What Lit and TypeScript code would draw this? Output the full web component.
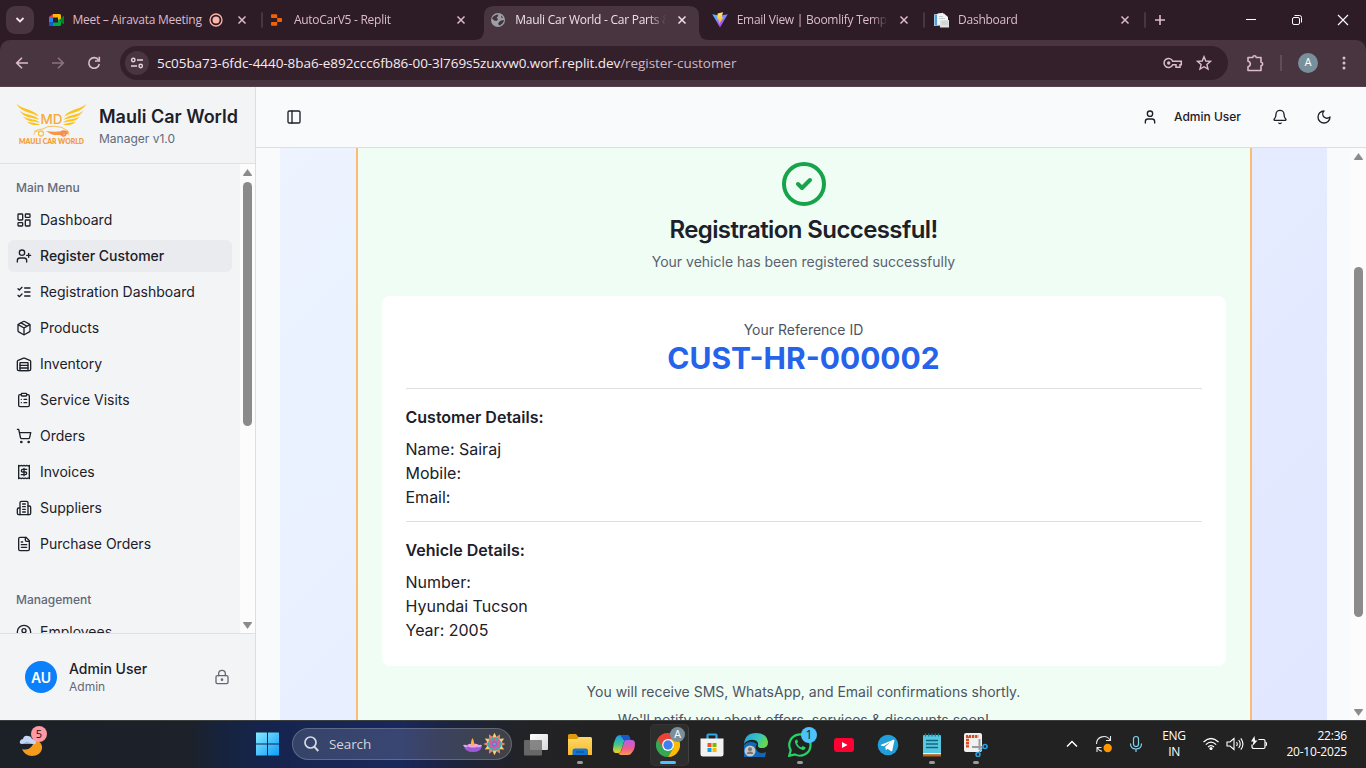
import { LitElement, html, svg, css, nothing } from "lit";
import { customElement, property } from "lit/decorators.js";

/* ---------- stroke icons on a 24 unit grid ---------- */
const glyphs: Record<string, unknown> = {
  dashboard: svg`<rect width="7" height="9" x="3" y="3" rx="1"/><rect width="7" height="5" x="14" y="3" rx="1"/><rect width="7" height="9" x="14" y="12" rx="1"/><rect width="7" height="5" x="3" y="16" rx="1"/>`,
  userPlus: svg`<path d="M16 21v-2a4 4 0 0 0-4-4H6a4 4 0 0 0-4 4v2"/><circle cx="9" cy="7" r="4"/><path d="M19 8v6M22 11h-6"/>`,
  checks: svg`<path d="m3 17 2 2 4-4M3 7l2 2 4-4M13 6h8M13 12h8M13 18h8"/>`,
  box: svg`<path d="M11 21.73a2 2 0 0 0 2 0l7-4A2 2 0 0 0 21 16V8a2 2 0 0 0-1-1.73l-7-4a2 2 0 0 0-2 0l-7 4A2 2 0 0 0 3 8v8a2 2 0 0 0 1 1.73z"/><path d="M12 22V12M3.29 7 12 12l8.71-5M7.5 4.27l9 5.15"/>`,
  warehouse: svg`<path d="M22 8.35V20a2 2 0 0 1-2 2H4a2 2 0 0 1-2-2V8.35A2 2 0 0 1 3.26 6.5l8-3.2a2 2 0 0 1 1.48 0l8 3.2A2 2 0 0 1 22 8.35Z"/><path d="M6 18h12M6 14h12"/><rect width="12" height="12" x="6" y="10"/>`,
  clipboard: svg`<rect width="8" height="4" x="8" y="2" rx="1"/><path d="M16 4h2a2 2 0 0 1 2 2v14a2 2 0 0 1-2 2H6a2 2 0 0 1-2-2V6a2 2 0 0 1 2-2h2M12 11h4M12 16h4M8 11h.01M8 16h.01"/>`,
  cart: svg`<circle cx="8" cy="21" r="1"/><circle cx="19" cy="21" r="1"/><path d="M2.05 2.05h2l2.66 12.42a2 2 0 0 0 2 1.58h9.78a2 2 0 0 0 1.95-1.57l1.65-7.43H5.12"/>`,
  receipt: svg`<path d="M4 2v20l2-1 2 1 2-1 2 1 2-1 2 1 2-1 2 1V2l-2 1-2-1-2 1-2-1-2 1-2-1-2 1Z"/><path d="M16 8h-6a2 2 0 1 0 0 4h4a2 2 0 1 1 0 4H8M12 17.5v-11"/>`,
  building: svg`<path d="M6 22V4a2 2 0 0 1 2-2h8a2 2 0 0 1 2 2v18Z"/><path d="M6 12H4a2 2 0 0 0-2 2v6a2 2 0 0 0 2 2h2M18 9h2a2 2 0 0 1 2 2v9a2 2 0 0 1-2 2h-2M10 6h4M10 10h4M10 14h4M10 18h4"/>`,
  file: svg`<path d="M15 2H6a2 2 0 0 0-2 2v16a2 2 0 0 0 2 2h12a2 2 0 0 0 2-2V7Z"/><path d="M14 2v4a2 2 0 0 0 2 2h4M10 9H8M16 13H8M16 17H8"/>`,
  userCircle: svg`<circle cx="12" cy="12" r="10"/><circle cx="12" cy="10" r="3"/><path d="M7 20.66V19a2 2 0 0 1 2-2h6a2 2 0 0 1 2 2v1.66"/>`,
  lock: svg`<circle cx="12" cy="16" r="1"/><rect x="3" y="10" width="18" height="12" rx="2"/><path d="M7 10V7a5 5 0 0 1 10 0v3"/>`,
  panel: svg`<rect width="18" height="18" x="3" y="3" rx="2"/><path d="M9 3v18"/>`,
  user: svg`<path d="M19 21v-2a4 4 0 0 0-4-4H9a4 4 0 0 0-4 4v2"/><circle cx="12" cy="7" r="4"/>`,
  bell: svg`<path d="M10.27 21a2 2 0 0 0 3.46 0M3.26 15.33A1 1 0 0 0 4 17h16a1 1 0 0 0 .74-1.67C19.41 13.96 18 12.5 18 8A6 6 0 0 0 6 8c0 4.5-1.41 5.96-2.74 7.33"/>`,
  moon: svg`<path d="M12 3a6 6 0 0 0 9 9 9 9 0 1 1-9-9Z"/>`,
  success: svg`<circle cx="12" cy="12" r="10"/><path d="m9 12 2 2 4-4"/>`,
};
const icon = (name: string, size = 16) => html`<svg width=${size} height=${size} viewBox="0 0 24 24" fill="none" stroke="currentColor" stroke-width="2" stroke-linecap="round" stroke-linejoin="round">${glyphs[name]}</svg>`;
const art = (w: number, h: number, body: unknown) => html`<svg width=${w} height=${h} viewBox="0 0 ${w} ${h}" fill="none">${body}</svg>`;

const base = css`
  * { box-sizing: border-box; }
  svg { display: block; flex: none; }
`;

/* ---------- browser frame ---------- */
const favicons: Record<string, unknown> = {
  meet: svg`<path d="M1 5 5 2v4H1z" fill="#ea4335"/><path d="M5 2h6.500q1.500 0 1.500 1.500V7l-3 2V5.500H5z" fill="#fbbc04"/><path d="M1 5.500h4v5H1z" fill="#2684fc"/><path d="M1 10.500h4V14H2.200Q1 14 1 12.800z" fill="#0066da"/><path d="M5 10.500h5V8l3-1.500v6Q13 14 11.500 14H5z" fill="#00ac47"/><path d="M12 8l3.200-4q.8-.4.8.4v7.200q0 .8-.8.4L12 9z" fill="#00832d"/>`,
  replit: svg`<path d="M3 2.200h4.400q.8 0 .8.800v3H3q-1 0-1-1v-2q0-.8 1-.8zM8.200 6H12q1 0 1 .8v2.400q0 .8-1 .8H8.200zM3 10h5.200v3q0 .8-.8.8H3q-1 0-1-.8v-2q0-1 1-1z" fill="#f26207"/>`,
  globe: svg`<circle cx="8" cy="8" r="7" fill="#9aa0a6"/><path d="M2 6.500c1.500-3 4-4 6.500-4L7.500 5l-1 .5L8 7.300l-1 1.500H4.500zM11 8.500l3-.5c-.2 2.500-2 4.500-4.500 5.500L8 12l1-2zM11 3.500l2 2-1.500.8z" fill="#45323c"/>`,
  vite: svg`<defs><linearGradient id="va" x1="0" y1="0" x2=".6" y2="1"><stop stop-color="#41d1ff"/><stop offset="1" stop-color="#bd34fe"/></linearGradient><linearGradient id="vb" x1="0" y1="0" x2="0" y2="1"><stop stop-color="#ffea83"/><stop offset="1" stop-color="#ffa800"/></linearGradient></defs><path d="M.3 2.300 8 15.500 15.700 2.300 8 3.700z" fill="url(#va)"/><path d="M11 .3 5.600 1.400 5.200 7.600l1.700-.4-.5 2.300 1.100-.3-.8 3.600L11.600 5l-2 .4z" fill="url(#vb)"/>`,
  page: svg`<path d="M1 2.500 10 .8v12.500L1 14z" fill="#e8eef2"/><path d="M1.500 2.800 4 2.500v11H1.500z" fill="#4f9fd4"/><path d="M5 1.500h6l4 3.500V12H5z" fill="#f4f4f2"/><path d="M7 8h9v7.500H7z" fill="#dfe2e2"/><path d="M8.500 10H15M8.500 12H15M6 4.500h4M6 6.500h6" stroke="#bdc3c5" stroke-width=".8"/>`,
};

const tabs = [
  { title: "Meet – Airavata Meeting", fav: "meet", rec: true, rule: true },
  { title: "AutoCarV5 - Replit", fav: "replit" },
  { title: "Mauli Car World - Car Parts & Services", fav: "globe", active: true },
  { title: "Email View | Boomlify Temporary Mail", fav: "vite", rule: true },
  { title: "Dashboard", fav: "page", rule: true },
];

@customElement("browser-frame")
class BrowserFrame extends LitElement {
  static styles = [base, css`
    :host { display: block; flex: none; height: 87px; background: #2d1b26; color: #dcbccb; font-family: "Open Sans", "Noto Sans", sans-serif; }
    .strip { height: 40px; display: flex; padding-left: 6px; }
    .search { width: 28px; height: 28px; margin: 6px 7.500px 0 0; border-radius: 9px; background: #49353f; display: grid; place-items: center; }
    .tab { width: 221.400px; height: 34px; margin-top: 6px; display: flex; align-items: center; padding: 0 0 6px 6px; position: relative; }
    .tab.active { color: #eee1e8; }
    .plate { position: absolute; left: -10px; top: 0; }
    .fav { position: relative; width: 16px; margin-right: 9px; }
    .title { position: relative; width: 151px; font-size: 12px; line-height: 18px; letter-spacing: -0.26px; white-space: nowrap; overflow: hidden; mask-image: linear-gradient(90deg, #000 134px, transparent 151px); }
    .rec .title { width: 134px; mask-image: none; }
    .recdot { margin: 0 9px 0 5px; }
    .x { position: relative; margin-left: 11px; }
    .rec .x { margin-left: 5px; }
    .rule { width: 2px; height: 16px; background: #49353f; margin-left: 14px; border-radius: 1px; }
    .new { margin: 14px 0 0 6px; }
    .controls { margin-left: auto; display: flex; }
    .controls > * { width: 46px; height: 40px; display: grid; place-items: center; color: #fff; }
    .bar { height: 47px; background: #49353f; border-radius: 10px 10px 0 0; border-bottom: 1px solid #57424c; display: flex; align-items: center; padding: 0 4px 1px; }
    .btn { width: 36px; display: grid; place-items: center; }
    .dim { opacity: 0.45; }
    .omni { width: 1108px; height: 34px; border-radius: 17px; background: #33202b; margin-left: 8px; display: flex; align-items: center; padding: 0 16px 0 5px; }
    .site { width: 24px; height: 24px; border-radius: 50%; background: #49353f; display: grid; place-items: center; margin-right: 8px; }
    .url { font-size: 13.500px; line-height: 20px; letter-spacing: -0.06px; color: #cdb9c3; white-space: nowrap; flex: 1; }
    .host { color: #f5ebf0; }
    .key { margin-right: 13px; }
    .ext { margin-left: 18px; }
    .split { width: 2px; height: 16px; background: #634c58; margin: 0 16px 0 16px; }
    .me { width: 20px; height: 20px; border-radius: 50%; background: #78909c; color: #fff; display: grid; place-items: center; font: 11px/20px Roboto, sans-serif; }
    .dots { margin-left: 17px; }
  `];
  tabTpl(t: any) {
    return html`<div class="tab ${t.active ? "active" : ""} ${t.rec ? "rec" : ""}">
      ${t.active ? html`<div class="plate">${art(235, 34, svg`<path d="M0 34q10 0 10-10V10q0-10 10-10h195q10 0 10 10v14q0 10 10 10z" fill="#49353f"/>`)}</div>` : nothing}
      <div class="fav">${art(16, 16, favicons[t.fav])}</div>
      <div class="title">${t.title}</div>
      ${t.rec ? html`<div class="recdot">${art(14, 14, svg`<circle cx="7" cy="7" r="6" stroke="#ffb4a9" stroke-width="1.300"/><circle cx="7" cy="7" r="3.500" fill="#ffb4a9"/>`)}</div>` : nothing}
      <div class="x">${art(10, 10, svg`<path d="m1.500 1.500 7 7m0-7-7 7" stroke="currentColor" stroke-width="1.500"/>`)}</div>
      ${t.rule ? html`<div class="rule"></div>` : nothing}
    </div>`;
  }
  render() {
    return html`
      <div class="strip">
        <div class="search">${art(10, 8, svg`<path d="m1.500 2 3.500 3.500L8.500 2" stroke="#f3e4ec" stroke-width="1.800"/>`)}</div>
        ${tabs.map((t) => this.tabTpl(t))}
        <div class="new">${art(12, 12, svg`<path d="M6 1v10M1 6h10" stroke="currentColor" stroke-width="1.600"/>`)}</div>
        <div class="controls">
          <div>${art(12, 12, svg`<path d="M1 5.500h10" stroke="#fff"/>`)}</div>
          <div>${art(12, 12, svg`<rect x="1.500" y="3.500" width="7" height="7" rx="1.500" stroke="#fff"/><path d="M3.500 1.500h5q2 0 2 2v5" stroke="#fff"/>`)}</div>
          <div>${art(12, 12, svg`<path d="m1 1 10 10M11 1 1 11" stroke="#fff" stroke-width="1.100"/>`)}</div>
        </div>
      </div>
      <div class="bar">
        <div class="btn">${art(14, 14, svg`<path d="M13 7H2m5-5.300L1.700 7 7 12.300" stroke="currentColor" stroke-width="1.600"/>`)}</div>
        <div class="btn dim">${art(14, 14, svg`<path d="M1 7h11M7 1.700 12.300 7 7 12.300" stroke="currentColor" stroke-width="1.600"/>`)}</div>
        <div class="btn">${art(14, 14, svg`<path d="M11.500 4A5.300 5.300 0 1 0 12.300 8" stroke="currentColor" stroke-width="1.600"/><path d="M12.300.800V5H8" stroke="currentColor" stroke-width="1.600"/>`)}</div>
        <div class="omni">
          <div class="site">${art(14, 12, svg`<g stroke="#e8d3dd" stroke-width="1.400"><circle cx="3.300" cy="3" r="1.700"/><path d="M7 3h6M1 9h6"/><circle cx="10.700" cy="9" r="1.700"/></g>`)}</div>
          <div class="url"><span class="host">5c05ba73-6fdc-4440-8ba6-e892ccc6fb86-00-3l769s5zuxvw0.worf.replit.dev</span>/register-customer</div>
          <div class="key">${art(20, 12, svg`<g stroke="currentColor" stroke-width="1.500"><path d="M9.700 4.200A4.500 4.500 0 1 0 9.700 7.800H13v2.500h4V7.800h1.300V4.200z"/></g><circle cx="5.700" cy="6" r="1.700" fill="currentColor"/>`)}</div>
          <div>${art(16, 16, svg`<path d="m8 1.700 1.800 4.300 4.700.4-3.600 3.100 1.100 4.600L8 11.700l-4 2.400 1.100-4.600L1.500 6.400 6.200 6z" stroke="currentColor" stroke-width="1.400"/>`)}</div>
        </div>
        <div class="ext">${art(18, 18, svg`<path d="M2 3.500h4.800q.2-1.700 1.700-1.700t1.700 1.700H15v4.800q1.700.2 1.700 1.700T15 11.700V16.500H2v-3.800q2.300-.4 2.300-2.700T2 7.300z" stroke="currentColor" stroke-width="1.600" stroke-linejoin="round"/>`)}</div>
        <div class="split"></div>
        <div class="me">A</div>
        <div class="dots">${art(16, 16, svg`<g fill="currentColor"><circle cx="9" cy="3" r="1.500"/><circle cx="9" cy="8" r="1.500"/><circle cx="9" cy="13" r="1.500"/></g>`)}</div>
      </div>`;
  }
}

/* ---------- scrollbar ---------- */
@customElement("scroll-rail")
class ScrollRail extends LitElement {
  @property({ type: Number }) before = 0;
  @property({ type: Number }) length = 100;
  static styles = [base, css`
    :host { display: flex; flex-direction: column; width: 15px; flex: none; background: #fcfcfc; align-items: center; padding: 5px 0 4px; }
    .thumb { width: 9px; border-radius: 5px; background: #8b8b8b; }
    .gap { flex: 1; }
  `];
  render() {
    return html`
      ${art(9, 7, svg`<path d="M4.500.500 8.500 6v1h-8V6z" fill="#8b8b8b" stroke="#8b8b8b" stroke-width=".6" stroke-linejoin="round"/>`)}
      <div class="thumb" style="margin-top:${this.before}px;height:${this.length}px"></div>
      <div class="gap"></div>
      ${art(9, 7, svg`<path d="M4.500 6.500 8.500 1V0h-8v1z" fill="#8b8b8b" stroke="#8b8b8b" stroke-width=".6" stroke-linejoin="round"/>`)}`;
  }
}

/* ---------- sidebar ---------- */
const menu: [string, string][] = [
  ["dashboard", "Dashboard"], ["userPlus", "Register Customer"], ["checks", "Registration Dashboard"],
  ["box", "Products"], ["warehouse", "Inventory"], ["clipboard", "Service Visits"], ["cart", "Orders"],
  ["receipt", "Invoices"], ["building", "Suppliers"], ["file", "Purchase Orders"],
];
const wing = svg`<path d="M.3.800C6 6.500 17 5.500 23 13.500 16 9.500 5.500 10 .3.800z"/><path d="M3.500 7.500C8 12.500 18 10.500 23.500 16.800 17 14.300 7.500 15.300 3.500 7.500z"/><path d="M7 13C11 17 18 14.800 24 19.500 18 18.300 10.500 19.300 7 13z"/><path d="M11 18.300c3 2.200 9 .700 13 3.600-4 .3-10 1-13-3.600z"/>`;

@customElement("app-sidebar")
class AppSidebar extends LitElement {
  static styles = [base, css`
    :host { display: flex; flex-direction: column; width: 256px; flex: none; background: #f3f4f6; border-right: 1px solid #dcdee1; color: #1c2029; font-family: Inter, sans-serif; }
    .brand { height: 77px; flex: none; border-bottom: 1px solid #dfe1e4; display: flex; padding: 16px 0 0 16px; gap: 12px; }
    .brand svg { overflow: visible; }
    .name { font-size: 18px; font-weight: 600; line-height: 28px; white-space: nowrap; }
    .ver { font-size: 12px; line-height: 16px; color: #626976; }
    .scroll { flex: 1; min-height: 0; display: flex; }
    .list { flex: 1; overflow: hidden; padding: 8px; }
    .label { height: 32px; padding: 0 8px; font-size: 12px; line-height: 32px; color: #626976; font-weight: 500; }
    .items { display: flex; flex-direction: column; gap: 4px; margin-bottom: 24px; }
    .item { height: 32px; display: flex; align-items: center; gap: 8px; padding: 0 8px; border-radius: 6px; font-size: 14px; line-height: 20px; }
    .on { background: #e9ebee; font-weight: 500; }
    .foot { height: 87px; flex: none; border-top: 1px solid #dfe1e4; display: flex; align-items: center; padding: 0 25px; }
    .avatar { width: 32px; height: 32px; border-radius: 50%; background: #0a80fb; color: #fff; font-size: 14px; font-weight: 600; display: grid; place-items: center; margin-right: 12px; }
    .who { flex: 1; }
    .user { font-size: 14px; line-height: 20px; font-weight: 500; }
    .role { font-size: 12px; line-height: 16px; color: #626976; }
    .lock { color: #626976; }
    .logotext { font: 800 8px Lato, sans-serif; }
    .md { font: 500 13.500px Inter, sans-serif; }
  `];
  render() {
    return html`
      <div class="brand">
        ${art(71, 50, svg`<g fill="#fdc31c"><g>${wing}</g><g transform="translate(71) scale(-1 1)">${wing}</g></g>
          <text class="md" x="35.500" y="21" text-anchor="middle" fill="#f5a93d">MD</text>
          <path d="M18 28.500q4-2.500 9-2.500l5-2.500q7-1 14 1l5 3" stroke="#f9c15a" stroke-width="1"/>
          <path d="M30 28q10 1.500 22-.500l1 3-6 1.500H38q-4-1-8-4z" fill="#f7954a"/>
          <path d="M18 32q0-4 5-4M47 28q5 0 6 4" stroke="#f8b848" stroke-width=".8"/>
          <circle cx="25" cy="30.500" r="2.500" stroke="#fbc53b" stroke-width="1.300"/><circle cx="47.500" cy="30.500" r="2.500" stroke="#f3855a" stroke-width="1.300"/>
          <text class="logotext" x="3" y="41" textLength="65" lengthAdjust="spacingAndGlyphs" fill="#f59e38">MAULI CAR WORLD</text>`)}
        <div><div class="name">Mauli Car World</div><div class="ver">Manager v1.0</div></div>
      </div>
      <div class="scroll">
        <div class="list">
          <div class="label">Main Menu</div>
          <div class="items">${menu.map(([i, t]) => html`<div class="item ${i === "userPlus" ? "on" : ""}">${icon(i)}<span>${t}</span></div>`)}</div>
          <div class="label">Management</div>
          <div class="item">${icon("userCircle")}<span>Employees</span></div>
        </div>
        <scroll-rail before="6" length="244"></scroll-rail>
      </div>
      <div class="foot">
        <div class="avatar">AU</div>
        <div class="who"><div class="user">Admin User</div><div class="role">Admin</div></div>
        <div class="lock">${icon("lock")}</div>
      </div>`;
  }
}

/* ---------- main page ---------- */
@customElement("register-page")
class RegisterPage extends LitElement {
  static styles = [base, css`
    :host { display: flex; flex-direction: column; flex: 1; min-width: 0; background: #f9fafc; color: #1c2029; font-family: Inter, sans-serif; }
    .top { height: 61px; flex: none; border-bottom: 1px solid #dcdee2; display: flex; align-items: center; padding: 0 34px 0 30px; }
    .me { margin-left: auto; display: flex; align-items: center; gap: 16px; font-size: 12px; line-height: 16px; font-weight: 500; margin-right: 31px; }
    .bell { margin-right: 28px; }
    .view { flex: 1; min-height: 0; display: flex; }
    .pad { flex: 1; padding: 0 24px; overflow: hidden; }
    .wash { display: flex; justify-content: center; height: 100%; background: linear-gradient(135deg, #edf4ff, #e0e7ff); }
    .card { width: 896px; height: 640px; flex: none; background: #f0fdf4; border: solid #fdba74; border-width: 0 2px; padding: 12px 24px 0; display: flex; flex-direction: column; align-items: center; text-align: center; }
    .ok { color: #16a34a; }
    h1 { margin: 6px 0 0; font-size: 24px; line-height: 32px; font-weight: 600; letter-spacing: -0.6px; }
    .sub { font-size: 14px; line-height: 20px; color: #5a6270; margin-top: 6px; }
    .sheet { width: 100%; margin: 24px 0 16px; background: #fff; border-radius: 8px; padding: 24px; }
    .cap { font-size: 14px; line-height: 20px; color: #4b5563; }
    .id { font-size: 30px; line-height: 36px; font-weight: 700; color: #2563eb; }
    .block { text-align: left; border-top: 1px solid #dddfe2; margin-top: 12px; padding-top: 16px; font-size: 16px; line-height: 24px; }
    .head { font-weight: 600; margin-bottom: 8px; }
    .note { font-size: 14px; line-height: 20px; color: #4b5563; margin-bottom: 8px; }
  `];
  block(head: string, rows: string[]) {
    return html`<div class="block"><div class="head">${head}</div>${rows.map((r) => html`<div>${r}</div>`)}</div>`;
  }
  render() {
    return html`
      <div class="top">
        ${icon("panel")}
        <div class="me">${icon("user")}<span>Admin User</span></div>
        <div class="bell">${icon("bell")}</div>
        ${icon("moon")}
      </div>
      <div class="view">
        <div class="pad"><div class="wash"><div class="card">
          <div class="ok">${icon("success", 48)}</div>
          <h1>Registration Successful!</h1>
          <div class="sub">Your vehicle has been registered successfully</div>
          <div class="sheet">
            <div class="cap">Your Reference ID</div>
            <div class="id">CUST-HR-000002</div>
            ${this.block("Customer Details:", ["Name: Sairaj", "Mobile:", "Email:"])}
            ${this.block("Vehicle Details:", ["Number:", "Hyundai Tucson", "Year: 2005"])}
          </div>
          <div class="note">You will receive SMS, WhatsApp, and Email confirmations shortly.</div>
          <div class="note">We'll notify you about offers, services &amp; discounts soon!</div>
        </div></div></div>
        <scroll-rail before="107" length="350"></scroll-rail>
      </div>`;
  }
}

/* ---------- taskbar ---------- */
const petals = Array.from({ length: 12 }, (_, i) => i * 30);
const apps: { art: unknown; run?: boolean; on?: boolean }[] = [
  { art: svg`<defs><linearGradient id="w1" x1="0" y1="0" x2="1" y2="1"><stop stop-color="#fff"/><stop offset="1" stop-color="#d8d8d8"/></linearGradient></defs><rect x="6" y="1" width="18" height="16" rx="1" fill="url(#w1)"/><rect x="0" y="7" width="18" height="15.500" rx="1" fill="#737373" opacity=".85"/>` },
  { run: true, art: svg`<defs><linearGradient id="f1" x1="0" y1="0" x2="0" y2="1"><stop stop-color="#ffd869"/><stop offset="1" stop-color="#f9b928"/></linearGradient></defs><path d="M0 2.500Q0 1 1.500 1H8l2.500 3H22v5H0z" fill="#dc9a0c"/><path d="M0 6h9l2-2h11.500Q24 4 24 5.500V22H0z" fill="url(#f1)"/><path d="M4.500 22v-4q0-2.500 2.500-2.500h10.500q2.500 0 2.500 2.500v4z" fill="#1375cf"/><path d="M8 19h8" stroke="#0b4f9e" stroke-width="1.200"/>` },
  { art: svg`<defs><linearGradient id="c1" x1="0" y1="0" x2="0" y2="1"><stop stop-color="#1a9bf0"/><stop offset=".5" stop-color="#3cc48d"/><stop offset="1" stop-color="#f7d21d"/></linearGradient><linearGradient id="c2" x1="0" y1="0" x2="0" y2="1"><stop stop-color="#b65fe8"/><stop offset=".6" stop-color="#f05f8b"/><stop offset="1" stop-color="#fb9a50"/></linearGradient></defs><path d="M8 2h7q2 0 2.700 2.500L18.500 7h-4q-2 0-2.700 2L9 18q-.6 2-2.500 2H4q-3 0-3-4 0-6 3-11.500Q5.300 2 8 2z" fill="url(#c1)"/><path d="M8 2h7q2 0 2.700 2.500L18.500 7h-4q-1.500 0-2.200 1z" fill="#1658c7"/><path d="M16 22H9q-2 0-2.500-2 2 0 2.700-2L12 9q.7-2 2.500-2H20q3 0 3 4 0 5-3 8.500-1.500 2.500-4 2.500z" fill="url(#c2)"/>` },
  { run: true, on: true, art: svg`<path d="M12 12 1.600 6A12 12 0 0 1 22.400 6L12 6.500z" fill="#ea4335"/><path d="M12 12 1.600 6A12 12 0 0 0 12 24l5.200-9z" fill="#34a853"/><path d="M12 6h10.400A12 12 0 0 1 12 24l5.200-9z" fill="#fbbc05"/><path d="M1.600 6A12 12 0 0 1 22.400 6H12L6.800 15z" fill="#ea4335"/><circle cx="12" cy="12" r="5.900" fill="#fff"/><circle cx="12" cy="12" r="4.700" fill="#3f7ff0"/>` },
  { art: svg`<path d="M7.500 6V2.500Q7.500 1.500 8.500 1.500h7q1 0 1 1V6" stroke="#2aa9e8" stroke-width="2.200"/><path d="M.5 5.500h23V21q0 2.500-2.500 2.500H3Q.5 23.500.5 21z" fill="#f2f2f2"/><path d="M7.500 10h4v4h-4z" fill="#f25022"/><path d="M12.500 10h4v4h-4z" fill="#7fba00"/><path d="M7.500 15h4v4h-4z" fill="#00a4ef"/><path d="M12.500 15h4v4h-4z" fill="#ffb900"/>` },
  { art: svg`<defs><linearGradient id="e1" x1="0" y1="0" x2="1" y2=".4"><stop stop-color="#229fe0"/><stop offset=".6" stop-color="#35c3c4"/><stop offset="1" stop-color="#66d750"/></linearGradient></defs><path d="M0 12a12 12 0 1 0 22 7q-7 3-10-3-1-3 1-5-7-5-13 1z" fill="#1068b8"/><path d="M0 11Q1 0 12 0q11 0 12 9 0 6-6 6-4 0-4-2 1-5-4-6Q4 6 0 11z" fill="url(#e1)"/><circle cx="6" cy="18" r="5.500" fill="#c6c6c6"/><circle cx="6" cy="16.300" r="2" fill="#777"/><path d="M2.800 21q0-2.500 3.200-2.500t3.200 2.500z" fill="#777"/>` },
  { run: true, art: svg`<path d="m1.200 22.800 1.500-5.500A10.600 10.600 0 1 1 6.900 21.400z" fill="#222" stroke="#25d366" stroke-width="2.200"/><path d="M8.300 6.500q-1.800 1-1.300 3 1.500 5.500 7.500 7.500 2.500.3 3.200-2.500l-3-1.600-1.400 1.600q-3-1.200-4.300-4.300l1.200-1.100-1.200-2.600z" fill="#25d366"/>` },
  { art: svg`<rect x="2" y="5" width="20" height="14" rx="3" fill="#ff0033"/><path d="m10 9 5.500 3-5.500 3z" fill="#fff"/>` },
  { art: svg`<circle cx="12" cy="12" r="10.300" fill="#229ed9"/><path d="m5 11.700 12.500-5q1.200-.3.900 1l-2.200 10q-.4 1-1.400.4l-3.200-2.400-1.700 1.600-.7-3.600L14.500 9l-6.800 4.200-2.700-.8q-.7-.3 0-.7z" fill="#fff"/>` },
  { run: true, art: svg`<rect x="3" y="2" width="18" height="21" rx="1" fill="#56c8e0"/><path d="M3 21h18v2.500H3z" fill="#b8601c"/><path d="M3 20h18v1.200H3z" fill="#f2f2f2"/><path d="M5.500.500v3M8.700.500v3M12 .500v3M15.200.500v3M18.500.500v3" stroke="#127e9c" stroke-width="1.300"/><path d="M6 7.500h12M6 11h12M6 14.500h12" stroke="#13657f" stroke-width="1.300"/>` },
  { run: true, art: svg`<rect x="0" y="0" width="18" height="19" rx="2" fill="#f0f0f0"/><path d="M3.500 14.500v-11h11" stroke="#d64a20" stroke-width="3" stroke-dasharray="2.300 .8"/><path d="M15.500 6v11M8 14h10" stroke="#9b9b9b" stroke-width="2"/><circle cx="21" cy="13.500" r="2" stroke="#2a9fe0" stroke-width="1.600"/><circle cx="14" cy="21.500" r="2" stroke="#2a9fe0" stroke-width="1.600"/><path d="m19 14.500-4.500 5" stroke="#2a9fe0"/>` },
];

@customElement("task-bar")
class TaskBar extends LitElement {
  static styles = [base, css`
    :host { box-sizing: border-box; display: flex; flex: none; height: 48px; align-items: center; border-top: 1px solid #3b3f3f; padding-bottom: 1px; color: #fff; font-family: "Open Sans", "Noto Sans", sans-serif;
      background: linear-gradient(90deg, #1c2128 0, #1c212a 190px, #16233f 225px, #15244d 265px, #19285c 400px, #1c2340 450px, #222327 520px, #222 600px); }
    .weather { margin-left: 19px; position: relative; }
    .count { position: absolute; left: 12px; top: -5px; width: 16px; height: 16px; border-radius: 50%; background: #ff99a4; color: #111; font-size: 11px; line-height: 16px; text-align: center; }
    .start { margin-left: 210px; }
    .search { width: 220px; height: 32px; margin: 0 2px 0 13px; border-radius: 16px; border: 1px solid rgba(255,255,255,.2); background: rgba(255,255,255,.14); display: flex; align-items: center; padding: 0 6px 0 11px; }
    .search span { font-size: 13.500px; letter-spacing: -0.1px; color: #d4d6db; margin-left: 10px; flex: 1; }
    .app { width: 44px; height: 47px; padding-top: 12px; display: flex; flex-direction: column; align-items: center; position: relative; }
    .app svg { position: relative; }
    .on::before { content: ""; position: absolute; left: 4px; top: 3px; width: 37px; height: 40px; border-radius: 5px; background: #2d2d2d; border: 1px solid #353535; border-right-color: #414141; }
    .dot { width: 6px; height: 3px; border-radius: 2px; background: #9a9a9a; margin-top: 4px; position: relative; }
    .on .dot { width: 16px; background: #4cc2ff; }
    .badge { position: absolute; width: 16px; height: 16px; border-radius: 50%; left: 23px; top: 6px; background: #4cc2ff; color: #0b2233; text-align: center; font: 12px/16px "Open Sans", sans-serif; }
    .badge.grey { background: #78909c; color: #fff; font: 11px/15px Roboto, sans-serif; left: 24px; width: 15px; height: 15px; }
    .tray { margin-left: auto; display: flex; align-items: center; padding-right: 19px; }
    .lang { font-size: 12px; line-height: 16px; text-align: center; width: 30px; margin: 0 13px 0 13px; letter-spacing: -0.35px; }
    .clock { font-size: 12px; line-height: 16px; text-align: right; letter-spacing: -0.2px; width: 70px; margin-left: 9px; white-space: nowrap; }
    .gap { margin-right: 17px; }
    .sync { margin-right: 13px; }
    .status { display: flex; gap: 6px; }
  `];
  render() {
    return html`
      <div class="weather">${art(26, 26, svg`<path d="M3 18q9 3 13-9 8 2 7 9-2 7-10 7-7 0-10-7z" fill="#f49b1d"/><path d="M3 13q-3 0-2-3 1-2 3-2 1-4 5-3 3 0 4 3 4 0 4 3t-3 2z" fill="#c4d6f5"/><path d="M3 13q4-3 8-1l3 1z" fill="#8ea9dd"/>`)}<div class="count">5</div></div>
      <div class="start">${art(24, 24, svg`<defs><linearGradient id="s1" x1="0" y1="0" x2="1" y2="1"><stop stop-color="#86eaff"/><stop offset="1" stop-color="#0f9cf7"/></linearGradient></defs><path d="M1 .500h11v11H1zM13 .500h11v11H13zM1 12.500h11v11H1zM13 12.500h11v11H13z" fill="url(#s1)"/>`)}</div>
      <div class="search">
        ${art(15, 16, svg`<circle cx="6.500" cy="6.500" r="5.500" stroke="#d9dbe3" stroke-width="1.700"/><path d="m10.500 10.800 3.800 4.200" stroke="#d9dbe3" stroke-width="2"/>`)}
        <span>Search</span>
        ${art(42, 24, svg`<path d="M1 14q9-5 18 0-1 6-9 6t-9-6z" fill="#9c5bd6"/><path d="M0 13q4-1 5 2-4 1-5-2zM19 13q-4-1-5 2 4 1 5-2z" fill="#d9a8f2"/><ellipse cx="10" cy="13.500" rx="5.500" ry="2" fill="#f4a4d6"/><path d="M9.500 14q-3-3 0-8 3 5 0 8z" fill="#ffb13d"/>
          ${petals.map((a) => svg`<path d="M31.500 .8 34.800 7.500h-6.600z" fill=${a % 60 ? "#f0806a" : "#f8cf72"} transform="rotate(${a} 31.500 12)"/>`)}
          <circle cx="31.500" cy="12" r="6.800" fill="#2fb3b5"/>${petals.filter((a) => a % 60 === 0).map((a) => svg`<circle cx="31.500" cy="8" r="1.900" fill="#e25b8f" transform="rotate(${a} 31.500 12)"/>`)}<circle cx="31.500" cy="12" r="3" fill="#a55bc9"/><circle cx="31.500" cy="12" r="1.200" fill="#3cc6c8"/>`)}
      </div>
      ${apps.map((a, i) => html`<div class="app ${a.on ? "on" : ""}">${art(24, 24, a.art)}${a.run ? html`<div class="dot"></div>` : nothing}${i === 3 ? html`<div class="badge grey">A</div>` : i === 6 ? html`<div class="badge">1</div>` : nothing}</div>`)}
      <div class="tray">
        <div class="gap">${art(12, 8, svg`<path d="m1 6.500 5-5 5 5" stroke="#fff" stroke-width="1.500"/>`)}</div>
        <div class="sync">${art(18, 18, svg`<path d="M1.500 9A7.300 7.300 0 0 1 15 5M15.500 1v4.500H11M7 16.300A7 7 0 0 1 2.500 13M2 17v-4.500h4.500" stroke="#e8e8e8" stroke-width="1.100"/><circle cx="12.700" cy="13" r="4.200" fill="#ff9800"/>`)}</div>
        <div>${art(20, 18, svg`<rect x="7.500" y="1.500" width="5" height="10" rx="2.500" stroke="#84d3ee" stroke-width="1.200"/><path d="M4.500 8.500q0 5.500 5.500 5.500t5.500-5.500M10 14v3" stroke="#84d3ee" stroke-width="1.200"/>`)}</div>
        <div class="lang">ENG<br/>IN</div>
        <div class="status">
          ${art(18, 16, svg`<g stroke="#fff" stroke-width="1.200"><path d="M1.500 6q7.500-7 15 0M3.800 8.600q5.200-5 10.400 0M6 11q3-2.800 6 0"/></g><circle cx="9" cy="12.500" r="1.600" fill="#fff"/>`)}
          ${art(18, 16, svg`<g stroke="#fff" stroke-width="1.100"><path d="M1 6h3l4-3.500v11L4 10H1zM10.500 6q1.500 2 0 4M12.700 4q3 4 0 8M14.800 2.300q4.300 5.700 0 11.400"/></g>`)}
          ${art(18, 16, svg`<path d="M8.500 3.500h5q1.500 0 1.500 1.500v6q0 1.500-1.500 1.500h-9Q2 12.500 2 11V8.500" stroke="#fff" stroke-width="1.200"/><path d="M15.500 6.500h1v3h-1" stroke="#fff"/><path d="M4.500 0 1 5.500h2.500L2.500 10l5-5.500H5z" fill="#fff"/>`)}
        </div>
        <div class="clock">22:36<br/>20-10-2025</div>
      </div>`;
  }
}

@customElement("app-root")
class AppRoot extends LitElement {
  static styles = [base, css`
    :host { display: flex; flex-direction: column; width: 1366px; height: 768px; overflow: hidden; }
    .page { flex: 1; min-height: 0; display: flex; }
  `];
  render() {
    return html`<browser-frame></browser-frame><div class="page"><app-sidebar></app-sidebar><register-page></register-page></div><task-bar></task-bar>`;
  }
}
